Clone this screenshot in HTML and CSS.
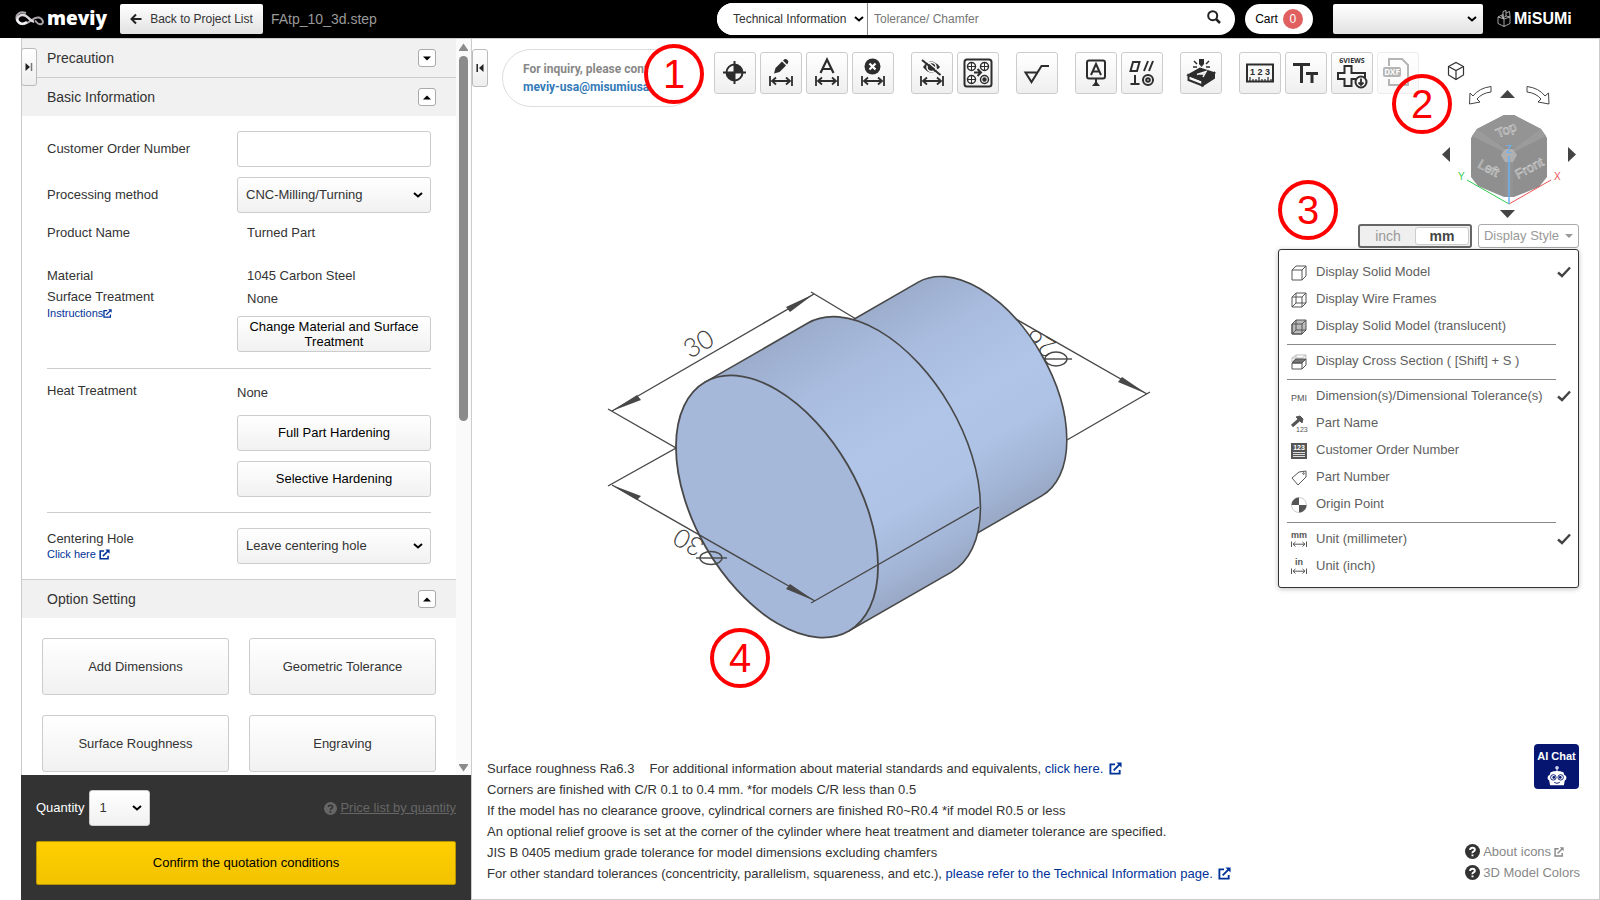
FILE: index.html
```html
<!DOCTYPE html>
<html lang="en">
<head>
<meta charset="utf-8">
<title>meviy - FAtp_10_3d.step</title>
<link rel="stylesheet" href="styles.css">
</head>
<body>
<svg class="defs" aria-hidden="true">
  <symbol id="ext" viewBox="0 0 14 14"><path d="M6.5 2.5H1.5V12.5H11.5V8.5" fill="none" stroke="currentColor" stroke-width="2"/><path d="M5 9L11.5 2.5" stroke="currentColor" stroke-width="2"/><path d="M8 0.5H13.5V6Z" fill="currentColor"/></symbol>
  <symbol id="dim" viewBox="0 0 24 10"><path d="M1 0V10M23 0V10M3 5H21M7 1.5L3 5L7 8.5M17 1.5L21 5L17 8.5" fill="none" stroke="currentColor" stroke-width="1.8"/></symbol>
  <symbol id="help" viewBox="0 0 14 14"><circle cx="7" cy="7" r="7" fill="currentColor"/><path class="help-mark" d="M4.800 5.500Q4.800 3.500 7 3.500T9.200 5.300Q9.200 6.300 8 6.900T7 8.600M7 9.800V11.500"/></symbol>
  <symbol id="check" viewBox="0 0 14 12"><path d="M1 6.5L5 10L13 1.5" fill="none" stroke="currentColor" stroke-width="2.4"/></symbol>
</svg>

<header class="topbar">
  <a class="logo" href="#">
    <svg width="30" height="16" viewBox="0 0 30 16" fill="none" aria-hidden="true">
      <path d="M11 2C5 0 1 3 1.500 7.500S7 15 12 12C17 9 20 5.500 24 6.500S29 12 26.500 13S21.500 11.500 20 9.500" stroke="#aaa4aa" stroke-width="2"/>
      <path d="M2 8.500C3 4.500 7 2.500 11 5S16 11 19 10.500" stroke="#ddd8dd" stroke-width="2.500"/>
      <path d="M2 8C3 13 8 14 12 11" stroke="#f2f2f2" stroke-width="2.500"/>
    </svg><span>meviy</span></a>
  <button class="back" type="button"><svg width="12" height="12" viewBox="0 0 12 12" aria-hidden="true"><path d="M11.500 6H2M6 1.500L1.500 6L6 10.500" fill="none" stroke="#222" stroke-width="2"/></svg>Back to Project List</button>
  <span class="filename">FAtp_10_3d.step</span>
  <form class="search">
    <select class="search-kind" aria-label="Search category"><option>Technical Information</option></select>
    <input class="search-text" type="text" placeholder="Tolerance/ Chamfer" aria-label="Search">
    <button class="search-go" type="button" aria-label="Search"><svg width="14" height="14" viewBox="0 0 14 14"><circle cx="5.700" cy="5.700" r="4.500" fill="none" stroke="#222" stroke-width="2"/><path d="M9 9L13 13" stroke="#222" stroke-width="2.500"/></svg></button>
  </form>
  <button class="cart" type="button">Cart <span class="count">0</span></button>
  <select class="account" aria-label="Account"><option></option></select>
  <a class="misumi" href="#"><svg width="14" height="18" viewBox="0 0 14 18" fill="none" stroke="#ccc" stroke-width="0.800" aria-hidden="true"><path d="M1 7L4 5.500L7 9L7 16.500L1 13.500ZM7 9L13 7V13.500L7 16.500M4 5.500L6 4.500V8M6 1.500L9 0.500V6L6 8ZM9 3L12.500 1.500L13 7M9 6L13 7M1 7L7 9"/></svg><span>MiSUMi</span></a>
</header>

<main class="workspace">
  <aside class="side">
    <button class="tab side-tab" type="button" aria-label="Expand panel"><svg width="8" height="8" viewBox="0 0 8 8"><path d="M0.500 0L5 4L0.500 8Z" fill="#222"/><path d="M6.500 0V8" stroke="#777" stroke-width="1.500"/></svg></button>
    <div class="side-body">
      <div class="scroll-content">
        <section class="sec">
          <h2>Precaution <button class="fold" type="button" aria-label="Open Precaution"><svg width="8" height="5" viewBox="0 0 8 5"><path d="M0 0.500H8L4 4.500Z"/></svg></button></h2>
        </section>
        <section class="sec">
          <h2>Basic Information <button class="fold" type="button" aria-label="Close Basic Information"><svg width="8" height="5" viewBox="0 0 8 5"><path d="M0 4.500H8L4 0.500Z"/></svg></button></h2>
          <div class="form">
            <div class="row tall"><label for="order">Customer Order Number</label><input id="order" class="field" type="text"></div>
            <div class="row tall"><label for="method">Processing method</label><select id="method" class="field"><option>CNC-Milling/Turning</option></select></div>
            <div class="row product"><span>Product Name</span><span class="value">Turned Part</span></div>
            <div class="row"><span>Material</span><span class="value">1045 Carbon Steel</span></div>
            <div class="row surface"><div>Surface Treatment<a class="mini" href="#">Instructions<svg width="9" height="9"><use href="#ext"/></svg></a></div>
              <div class="stack"><span class="value">None</span><button class="field two-line" type="button">Change Material and Surface Treatment</button></div></div>
            <hr>
            <div class="row heat"><span>Heat Treatment</span>
              <div class="stack"><span class="heat-value">None</span><button class="field" type="button">Full Part Hardening</button><button class="field" type="button">Selective Hardening</button></div></div>
            <hr>
            <div class="row tall"><div class="centering"><label for="hole">Centering Hole</label><a class="mini spaced" href="#">Click here<svg width="11" height="11"><use href="#ext"/></svg></a></div><select id="hole" class="field"><option>Leave centering hole</option></select></div>
          </div>
        </section>
        <section class="sec">
          <h2>Option Setting <button class="fold" type="button" aria-label="Close Option Setting"><svg width="8" height="5" viewBox="0 0 8 5"><path d="M0 4.500H8L4 0.500Z"/></svg></button></h2>
          <div class="options">
            <button type="button">Add Dimensions</button><button type="button">Geometric Tolerance</button>
            <button type="button">Surface Roughness</button><button type="button">Engraving</button>
          </div>
        </section>
      </div>
      <div class="scrollbar" aria-hidden="true">
        <svg width="9" height="8" viewBox="0 0 9 8"><path d="M4.500 0.500L9 7V8H0V7Z" fill="#8b8b8b"/></svg>
        <i class="thumb"></i>
        <svg width="9" height="8" viewBox="0 0 9 8"><path d="M0 0H9V1L4.500 7.500L0 1Z" fill="#8b8b8b"/></svg>
      </div>
    </div>
    <div class="order-bar">
      <div class="qty"><label for="qty">Quantity</label><select id="qty"><option>1</option></select>
        <a href="#"><svg width="13" height="13"><use href="#help"/></svg><u>Price list by quantity</u></a></div>
      <button class="confirm" type="button">Confirm the quotation conditions</button>
    </div>
  </aside>

  <section class="viewer">
    <svg class="model" width="560" height="390" viewBox="600 265 560 390" role="img" aria-label="Turned part with dimensions">
      <defs>
        <linearGradient id="big" gradientUnits="userSpaceOnUse" x1="806" y1="324" x2="950" y2="573"><stop offset="0" stop-color="#9cadcc"/><stop offset=".22" stop-color="#a9bcdf"/><stop offset=".5" stop-color="#b0c5e8"/><stop offset=".72" stop-color="#aec3e6"/><stop offset=".9" stop-color="#a3b5d6"/><stop offset="1" stop-color="#98a8c5"/></linearGradient>
        <linearGradient id="small" gradientUnits="userSpaceOnUse" x1="918" y1="282" x2="1042" y2="496"><stop offset="0" stop-color="#9cadcc"/><stop offset=".22" stop-color="#a9bcdf"/><stop offset=".5" stop-color="#b0c5e8"/><stop offset=".7" stop-color="#adc2e5"/><stop offset=".9" stop-color="#a1b3d3"/><stop offset="1" stop-color="#98a8c5"/></linearGradient>
      </defs>
      <g stroke="#484848" stroke-width="1.400" fill="none">
        <path d="M1000 310L1147 394M1150 392L1067 440"/>
        <path d="M1147 394L1118 382L1122 377Z" fill="#484848" stroke="none"/>
        <ellipse cx="1056" cy="359" rx="11" ry="7"/><path d="M1042 359H1072"/>
      </g>
      <text class="dimtext" transform="translate(1058 343) rotate(210)">26</text>
      <path d="M818.300 339.800L918.300 282.100A123.400 70.500 60 0 1 1041.700 495.900L941.700 553.600Z" fill="url(#small)" stroke="#484848" stroke-width="1.600"/>
      <path d="M705.200 382.100L807.500 323.300A143.700 82 60 0 1 951.400 572.100L848.900 630.900Z" fill="url(#big)" stroke="#484848" stroke-width="1.600"/>
      <ellipse cx="777" cy="506.500" rx="143.700" ry="82" transform="rotate(60 777 506.500)" fill="#a6b8da" stroke="#484848" stroke-width="1.800"/>
      <g stroke="#484848" stroke-width="1.400" fill="none">
        <path d="M612 411L814 294M811 292L856 319M608 409L676 448L608 486M612 485L815 601M811 603L979 507"/>
        <ellipse cx="711" cy="558" rx="11" ry="6.500"/><path d="M696 558H727"/>
      </g>
      <g fill="#484848"><path d="M814 294L786 307L790 312ZM612 411L637 395L641 400ZM612 485L637 500L641 496ZM815 601L786 589L790 584Z"/></g>
      <text class="dimtext" transform="translate(690 359) rotate(-30)">30</text>
      <text class="dimtext" transform="translate(706 542) rotate(210)">30</text>
    </svg>

    <div class="viewer-top">
      <button class="tab" type="button" aria-label="Collapse panel"><svg width="8" height="8" viewBox="0 0 8 8"><path d="M7.500 0L3 4L7.500 8Z" fill="#222"/><path d="M1.200 0V8" stroke="#222" stroke-width="1.500"/></svg></button>
      <div class="inquiry">For inquiry, please contact<a href="#">meviy-usa@misumiusa.com</a></div>
      <div class="tools">
        <div class="group">
          <button type="button" aria-label="Origin"><svg viewBox="0 0 42 42"><circle cx="20.500" cy="20.500" r="8" fill="none" stroke="currentColor" stroke-width="2"/><path d="M20.500 20.500V12.500A8 8 0 0 1 28.500 20.500ZM20.500 20.500V28.500A8 8 0 0 1 12.500 20.500Z" fill="currentColor"/><path d="M20.500 9V32M9 20.500H32" stroke="currentColor" stroke-width="2"/></svg></button>
          <button type="button" aria-label="Edit dimension"><svg viewBox="0 0 42 42"><path d="M14 21.500L15.500 16L22 9.500L26 13.500L19.500 20ZM23 8.500L24.500 7.200Q26 6.500 27.500 8T28 11L27 12.500Z" fill="currentColor"/><use href="#dim" x="9" y="24" width="24" height="10"/></svg></button>
          <button type="button" aria-label="Dimension text"><svg viewBox="0 0 42 42"><path d="M14.500 21L21 7.500L27.500 21M17 17H25" fill="none" stroke="currentColor" stroke-width="2.200"/><use href="#dim" x="9" y="24" width="24" height="10"/></svg></button>
          <button type="button" aria-label="Delete dimension"><svg viewBox="0 0 42 42"><circle cx="20.500" cy="14.500" r="8" fill="currentColor"/><path d="M17.500 11.500L23.500 17.500M23.500 11.500L17.500 17.500" stroke="#fff" stroke-width="2.200"/><use href="#dim" x="9" y="24" width="24" height="10"/></svg></button>
        </div>
        <div class="group">
          <button type="button" aria-label="Hide dimensions"><svg viewBox="0 0 42 42"><path d="M12 15Q20 4 29 15Q20 26 12 15Z" fill="currentColor"/><circle cx="20.500" cy="15" r="4.500" fill="none" stroke="#fff" stroke-width="1.500"/><path d="M12.500 6.500L31 21.500" stroke="#f7f7f7" stroke-width="1.500"/><path d="M11 8L29.500 23" stroke="currentColor" stroke-width="2"/><use href="#dim" x="9" y="24" width="24" height="10"/></svg></button>
          <button type="button" aria-label="Hole groups"><svg viewBox="0 0 42 42" fill="none" stroke="currentColor" stroke-width="1.500"><rect x="7.500" y="7.500" width="27" height="27" rx="2.500" stroke-width="2"/><circle cx="14.500" cy="14.500" r="4"/><circle cx="27.500" cy="14.500" r="4"/><circle cx="14.500" cy="27.500" r="4"/><circle cx="27.500" cy="27.500" r="4"/><circle cx="27.500" cy="27.500" r="1.500" fill="currentColor"/><path d="M14.500 10V19M10 14.500H19M27.500 10V19M23 14.500H32M14.500 23V32M10 27.500H19" stroke-width="1"/><path d="M17 20.500H23M20.500 17L24 20.500L20.500 24" stroke-width="2"/></svg></button>
        </div>
        <div class="group">
          <button type="button" aria-label="Surface roughness"><svg viewBox="0 0 42 42" fill="none" stroke="currentColor" stroke-width="2"><path d="M22 20.500H9.500L15.500 30L25.500 14H33"/></svg></button>
        </div>
        <div class="group">
          <button type="button" aria-label="Datum"><svg viewBox="0 0 42 42" fill="none" stroke="currentColor" stroke-width="2"><rect x="12" y="8.500" width="18" height="18" rx="2"/><path d="M16 23L21 12L26 23M18 19.500H24"/><path d="M21 27V31"/><path d="M21 29L25 34H17Z" fill="currentColor" stroke="none"/></svg></button>
          <button type="button" aria-label="Geometric tolerance"><svg viewBox="0 0 42 42" fill="none" stroke="currentColor" stroke-width="2"><path d="M12 10H18.500L16 19H9.500ZM23 19L27 9M28 19L32 9M14 23V32M9.500 32H18.500"/><circle cx="27" cy="28" r="5"/><circle cx="27" cy="28" r="1.800"/></svg></button>
        </div>
        <div class="group">
          <button type="button" aria-label="Engraving"><svg viewBox="0 0 42 42" fill="none" stroke="currentColor" stroke-width="2"><path d="M8.500 23L22.500 28.500V33.500L8.500 28Z" fill="#f5f5f5"/><path d="M22.500 28.500L34 21V26L22.500 33.500Z" fill="currentColor"/><path d="M8.500 23L20 16.500L34 21L22.500 28.500Z" fill="currentColor"/><path d="M17 22.500L26 19.500L23 25M19.500 22H24" stroke="#f5f5f5" stroke-width="1.500"/><path d="M19 7H24V12L21.500 15L19 12Z" fill="currentColor" stroke="none"/><path d="M14 9L17 12M29 9L26 12M13 15H17M26 15H30" stroke-width="1.500"/></svg></button>
        </div>
        <div class="group">
          <button type="button" aria-label="Measure"><svg viewBox="0 0 42 42"><rect x="8" y="12.500" width="26" height="17" fill="none" stroke="currentColor" stroke-width="2"/><text x="21" y="23" class="t9" text-anchor="middle">1 2 3</text><path d="M11 29V25M14 29V27M17 29V27M20 29V25M23 29V27M26 29V27M29 29V25M32 29V27" stroke="currentColor" stroke-width="1.200"/></svg></button>
          <button type="button" aria-label="Text size"><svg viewBox="0 0 42 42" fill="none" stroke="currentColor" stroke-width="3"><path d="M8 12.500H25M16.500 12.500V31M21 21.500H33M27 21.500V31"/></svg></button>
          <button type="button" aria-label="Download 6 views"><svg viewBox="0 0 42 42"><text x="21" y="11" class="t7" text-anchor="middle">6VIEWS</text><path d="M13.500 14H20.500V21H34V27H20.500V34H13.500V27H7V21H13.500Z" fill="none" stroke="currentColor" stroke-width="2"/><circle cx="30" cy="30" r="5.500" fill="#f5f5f5" stroke="currentColor" stroke-width="2"/><path d="M30 26.500V33M27.500 30.500L30 33L32.500 30.500" fill="none" stroke="currentColor" stroke-width="1.800"/></svg></button>
          <button class="off" type="button" aria-label="Download DXF" disabled><svg viewBox="0 0 42 42"><path d="M12 14V7H25L31 13V33H12V27" fill="none" stroke="currentColor" stroke-width="2"/><rect x="6" y="15" width="18" height="10" rx="2" fill="currentColor"/><text x="15" y="23" class="t7 inv" text-anchor="middle">DXF</text></svg></button>
        </div>
      </div>
    </div>

    <div class="view-panel">
      <svg class="nav" width="142" height="162" viewBox="1437 58 142 162" role="img" aria-label="View orientation">
        <g fill="#fff" stroke="#333" stroke-width="1.200"><path d="M1448.500 66.500L1456 62.500L1463.500 66.500V75L1456 79.500L1448.500 75ZM1448.500 66.500L1456 70.500L1463.500 66.500M1456 70.500V79.500" /></g>
        <g fill="#fff" stroke="#444" stroke-width="1"><path d="M1491 86.500Q1479 88 1473 96L1470 93L1469.500 104L1480 102L1477 99Q1482 93 1491 92Z"/><path d="M1527 86.500Q1539 88 1545 96L1548.500 93L1549 104L1538 102L1541 99Q1536 93 1527 92Z"/></g>
        <path d="M1500 98H1515L1507.500 90ZM1500 210H1515L1507.500 218ZM1450 147V162L1442 154.500ZM1568 147V162L1576 154.500Z" fill="#444"/>
        <path d="M1504 115H1514L1541 129L1547 138V177L1539 187L1514 197H1504L1478 186L1471 177V138L1477 129Z" fill="#8f8f8f"/>
        <path d="M1504 115H1514L1541 129L1513 148H1505L1477 129Z" fill="#949494"/>
        <path d="M1477 129L1504 148V152L1472 136ZM1541 129L1514 148V152L1546 136Z" fill="#9b9b9b"/>
        <path d="M1501 155L1505 149H1513L1517 155L1513 162H1505Z" fill="#b0b0b0"/>
        <path d="M1505 162H1513V197H1505Z" fill="#939393"/>
        <g class="cube-label"><text transform="translate(1498 138) rotate(-22)">Top</text><text transform="translate(1477 167) rotate(28)">Left</text><text transform="translate(1518 179) rotate(-28)">Front</text></g>
        <path d="M1467 180L1509 204" stroke="#3c5"/><path d="M1551 180L1509 204" stroke="#e55"/><path d="M1509 156V204" stroke="#6ab0f5" stroke-width="1.500"/>
        <text class="axis ax-y" x="1458" y="180">Y</text><text class="axis ax-x" x="1554" y="180">X</text><text class="axis ax-z" x="1506" y="153">Z</text>
      </svg>
      <div class="view-row">
        <div class="units"><button type="button">inch</button><button class="on" type="button">mm</button></div>
        <button class="style-btn" type="button">Display Style<svg width="8" height="4" viewBox="0 0 8 4"><path d="M0 0H8L4 4Z" fill="currentColor"/></svg></button>
      </div>
      <ul class="menu">
        <li><button type="button"><svg viewBox="0 0 16 16"><path d="M1 5H11V15H1ZM1 5L5 1H15V11L11 15M11 5L15 1"/></svg>Display Solid Model<svg class="tick"><use href="#check"/></svg></button></li>
        <li><button type="button"><svg viewBox="0 0 16 16"><path d="M1 5H11V15H1ZM1 5L5 1H15V11L11 15M11 5L15 1M5 1V11H15M5 11L1 15"/></svg>Display Wire Frames</button></li>
        <li><button type="button"><svg viewBox="0 0 16 16"><path d="M1 5L5 1H15V11L11 15H1Z" fill="#bbb"/><path d="M1 5H11V15H1ZM11 5L15 1M5 1V11H15M5 11L1 15"/></svg>Display Solid Model (translucent)</button></li>
        <li class="sep"><button type="button"><svg viewBox="0 0 16 16"><path d="M1 8L5 4V1H15V5M1 4L5 1M1 4V8M1 4H11L15 1" stroke="#bbb"/><path d="M1 9L5 5H15L11 9Z" fill="#777"/><path d="M1 9H11V15H1ZM15 5V11L11 15"/></svg>Display Cross Section ( [Shift] + S )</button></li>
        <li class="sep"><button type="button"><svg viewBox="0 0 16 16"><text x="0" y="12" class="m8">PMI</text></svg>Dimension(s)/Dimensional Tolerance(s)<svg class="tick"><use href="#check"/></svg></button></li>
        <li><button type="button"><svg viewBox="0 0 16 16"><path d="M1 10L9 3" stroke-width="3"/><path d="M5 1L9 0L12 3L11 7L8 4Z" fill="#555"/><text x="5" y="16" class="m6">123</text></svg>Part Name</button></li>
        <li><button type="button"><svg viewBox="0 0 16 16"><rect x="0.500" y="0.500" width="15" height="15" fill="#555"/><text x="8" y="7" class="m7" text-anchor="middle">123</text><path d="M2 9.500H14M2 11.500H14M2 13.500H14" stroke="#fff" stroke-width=".8"/></svg>Customer Order Number</button></li>
        <li><button type="button"><svg viewBox="0 0 16 16"><path d="M1 8L8 2L15 1V7L7 15Z"/><circle cx="12.500" cy="3.500" r=".8"/></svg>Part Number</button></li>
        <li><button type="button"><svg viewBox="0 0 16 16"><circle cx="8" cy="8" r="7.500" stroke="#ccc"/><path d="M8 8V0.500A7.500 7.500 0 0 0 .5 8ZM8 8V15.500A7.500 7.500 0 0 0 15.500 8Z" fill="#555" stroke="none"/></svg>Origin Point</button></li>
        <li class="sep"><button type="button"><svg viewBox="0 0 16 16"><text x="8" y="5.500" class="m9" text-anchor="middle">mm</text><path d="M.5 9.500V15M15.500 9.500V15M2 12.200H14M4.500 10L2 12.200L4.500 14.500M11.500 10L14 12.200L11.500 14.500"/></svg>Unit (millimeter)<svg class="tick"><use href="#check"/></svg></button></li>
        <li><button type="button"><svg viewBox="0 0 16 16"><text x="8" y="6" class="m9" text-anchor="middle">in</text><path d="M.5 9.500V15M15.500 9.500V15M2 12.200H14M4.500 10L2 12.200L4.500 14.500M11.500 10L14 12.200L11.500 14.500"/></svg>Unit (inch)</button></li>
      </ul>
    </div>

    <div class="viewer-bottom">
      <div class="notes">
        <p>Surface roughness Ra6.3<span class="more">For additional information about material standards and equivalents, <a href="#">click here. <svg width="13" height="13"><use href="#ext"/></svg></a></span></p>
        <p>Corners are finished with C/R 0.1 to 0.4 mm. *for models C/R less than 0.5</p>
        <p>If the model has no clearance groove, cylindrical corners are finished R0~R0.4 *if model R0.5 or less</p>
        <p>An optional relief groove is set at the corner of the cylinder where heat treatment and diameter tolerance are specified.</p>
        <p>JIS B 0405 medium grade tolerance for model dimensions excluding chamfers</p>
        <p>For other standard tolerances (concentricity, parallelism, squareness, and etc.), <a href="#">please refer to the Technical Information page. <svg width="13" height="13"><use href="#ext"/></svg></a></p>
      </div>
      <div class="corner">
        <button class="chat" type="button">AI Chat<svg width="22" height="22" viewBox="0 0 22 24"><circle cx="11" cy="3" r="2" fill="#cfd4ee"/><path d="M11 4V8" stroke="#fff"/><path d="M4 8Q11 5 18 8L19 11Q22 12 21 15.500L19.500 17L18.500 22H3.500L2.500 17L1 15.500Q0 12 3 11Z" fill="#fff"/><g fill="#fff" stroke="#061670" stroke-width="1"><circle cx="7" cy="13.500" r="3"/><circle cx="15" cy="13.500" r="3"/><path d="M8 19Q11 21 14 19" fill="none"/></g><circle cx="7.500" cy="13.500" r="1.500" fill="#061670"/><circle cx="14.500" cy="13.500" r="1.500" fill="#061670"/></svg></button>
        <a href="#"><svg width="15" height="15"><use href="#help"/></svg>About icons <svg width="10" height="10"><use href="#ext"/></svg></a>
        <a href="#"><svg width="15" height="15"><use href="#help"/></svg>3D Model Colors</a>
      </div>
    </div>
    <b class="mark m-1">1</b><b class="mark m-2">2</b><b class="mark m-3">3</b><b class="mark m-4">4</b>
  </section>
</main>
</body>
</html>
```
FILE: styles.css
```css
* { box-sizing: border-box; }
body {
  margin: 0;
  height: 100vh;
  display: flex;
  flex-direction: column;
  overflow: hidden;
  background: #fff;
  color: #333;
  font: 13px/18px "Liberation Sans", Arial, sans-serif;
}
button, input, select { font: inherit; color: inherit; margin: 0; }
button { cursor: pointer; padding: 0; }
a { color: #003399; text-decoration: none; }
select {
  --chevron: url("data:image/svg+xml,%3Csvg xmlns='http://www.w3.org/2000/svg' width='10' height='6'%3E%3Cpath d='M1 1L5 4.500L9 1' fill='none' stroke='black' stroke-width='2'/%3E%3C/svg%3E");
  appearance: none;
}
.defs { display: none; }
.help-mark { fill: none; stroke: var(--mark, #fff); stroke-width: 1.8; }

/* header */
.topbar {
  flex: none;
  height: 38px;
  padding: 0 29px 0 15px;
  display: flex;
  align-items: center;
  background: #000;
  font-size: 12px;
}
.logo { display: flex; align-items: center; gap: 2px; width: 105px; color: #fff; font: 800 19px/30px "Open Sans", sans-serif; }
.logo span { padding-bottom: 2px; }
.back {
  width: 143px;
  height: 30px;
  display: flex;
  align-items: center;
  justify-content: center;
  gap: 8px;
  border: 0;
  border-radius: 2px;
  background: linear-gradient(#fff, #e2e2e2);
}
.filename { margin-left: 8px; font-size: 14px; color: #999; }
.search { margin-left: auto; width: 518px; height: 32px; display: flex; border-radius: 16px; background: #fff; overflow: hidden; }
.search-kind { width: 151px; padding: 0 0 0 16px; border: 0; border-right: 1px solid #888; background: var(--chevron) no-repeat right 3px center, #fff; }
.search-text { flex: 1; min-width: 0; border: 0; padding: 0 6px; outline: 0; background: none; }
.search-text::placeholder { color: #777; }
.search-go { width: 42px; border: 0; background: none; }
.cart {
  margin-left: 10px;
  width: 68px;
  height: 30px;
  display: flex;
  align-items: center;
  justify-content: center;
  gap: 5px;
  border: 0;
  border-radius: 15px;
  background: #fff;
  color: #000;
}
.count { width: 20px; height: 20px; line-height: 20px; border-radius: 50%; background: #e06060; color: #fff; }
.account { margin-left: 20px; width: 150px; height: 30px; border: 0; border-radius: 2px; background: var(--chevron) no-repeat right 6px center, linear-gradient(#fff, #e2e2e2); }
.misumi { margin-left: 14px; width: 74px; display: flex; align-items: center; gap: 3px; color: #fff; font: bold 16px/30px "Liberation Sans", sans-serif; }
.misumi svg { flex: none; }

/* side panel */
.workspace { flex: 1; min-height: 0; display: flex; padding-left: 21px; }
.side { position: relative; flex: none; width: 450px; display: flex; flex-direction: column; }
.tab {
  width: 16px;
  height: 38px;
  flex: none;
  display: flex;
  align-items: center;
  justify-content: center;
  border: 1px solid #bbb;
  border-radius: 3px;
  background: linear-gradient(#fff, #eee);
}
.side-tab { position: absolute; left: 0; top: 10px; z-index: 1; }
.side-body { flex: 1; min-height: 0; display: flex; border-left: 1px solid #ccc; border-top: 1px solid #ccc; }
.scroll-content { flex: 1; overflow: hidden; }
.scrollbar { width: 15px; padding: 4px 0 3px; display: flex; flex-direction: column; align-items: center; background: #fafafa; }
.thumb { width: 9px; height: 365px; margin: 5px 0 auto; border-radius: 5px; background: #8b8b8b; }
.sec + .sec { border-top: 1px solid #ccc; }
h2 {
  margin: 0;
  height: 38px;
  padding: 0 20px 0 25px;
  display: flex;
  align-items: center;
  justify-content: space-between;
  background: #f1f1f1;
  font-size: 14px;
  font-weight: normal;
}
.fold { width: 18px; height: 18px; display: flex; align-items: center; justify-content: center; border: 1px solid #aaa; border-radius: 3px; background: #fff; }
.form { padding: 15px 25px; }
.row { display: grid; grid-template-columns: 190px 1fr; }
.row.tall { align-items: center; }
.row.tall + .row.tall { margin-top: 10px; }
.product { margin: 11px 0 25px; }
.value { padding-left: 10px; }
.field {
  width: 100%;
  height: 36px;
  padding: 0 8px;
  border: 1px solid #ccc;
  border-radius: 3px;
  background: linear-gradient(#fff, #f1f1f1);
}
input.field { background: #fff; }
select.field { background: var(--chevron) no-repeat right 7px center, linear-gradient(#fff, #f1f1f1); }
button.field { color: #000; }
.two-line { line-height: 15px; }
.surface { margin-top: 3px; }
.surface .stack { padding-top: 2px; gap: 8px; }
.stack { display: flex; flex-direction: column; }
.mini { display: flex; align-items: center; font-size: 11px; line-height: 14px; }
.spaced { gap: 3px; }
.heat .stack { gap: 10px; padding-top: 2px; }
.heat-value { margin-bottom: 3px; }
.centering { line-height: 16px; }
hr { margin: 15px 0; border: 0; border-top: 1px solid #ccc; }
.surface + hr { margin-top: 16px; }
hr + .heat { margin-top: -2px; }
.options { display: grid; grid-template-columns: 1fr 1fr; gap: 20px; padding: 20px; }
.options button { height: 57px; border: 1px solid #ccc; border-radius: 3px; background: linear-gradient(#fff, #f1f1f1); }
.order-bar { padding: 15px; background: #333; }
.qty { display: flex; align-items: center; margin-bottom: 15px; color: #fff; }
.qty select { width: 61px; height: 36px; margin-left: 5px; padding: 0 9px; border: 1px solid #ccc; border-radius: 3px; background: var(--chevron) no-repeat right 7px center, linear-gradient(#fff, #f1f1f1); color: #333; }
.qty a { --mark: #333; margin-left: auto; display: flex; align-items: center; gap: 3px; color: #666; }
.confirm { width: 100%; height: 44px; border: 1px solid #b89400; border-radius: 2px; background: linear-gradient(#ffcf00, #f2c300); color: #000; }

/* viewer */
.viewer {
  position: relative;
  flex: 1;
  min-width: 0;
  display: flex;
  flex-direction: column;
  justify-content: space-between;
  border: 1px solid #ccc;
}
.model { position: absolute; left: 128px; top: 226px; }
.dimtext { font: 300 26px Lato, "Liberation Sans", sans-serif; fill: #404040; }
.viewer-top { position: relative; display: flex; padding-top: 10px; align-items: flex-start; }
.inquiry {
  width: 196px;
  height: 58px;
  margin: 0 16px 0 14px;
  padding: 10px 20px 0;
  border: 1px solid #ddd;
  border-radius: 29px;
  background: #fff;
  color: #888;
  font: bold 12px/18px Roboto, "Liberation Sans", sans-serif;
  white-space: nowrap;
}
.inquiry a { display: block; color: #337ab7; }
.tools { display: flex; gap: 17px; padding-top: 3px; }
.group { display: flex; gap: 4px; }
.tools button { width: 42px; height: 42px; border: 1px solid #ccc; border-radius: 3px; background: linear-gradient(#fff, #efefef); color: #2d2d2d; }
.tools svg { display: block; width: 42px; height: 42px; margin: -1px; }
.tools .off { opacity: .35; }
.t9 { font: bold 9px "Liberation Sans", sans-serif; fill: currentColor; }
.t7 { font: bold 7px "Open Sans", sans-serif; fill: currentColor; }
.inv { fill: #fff; font-size: 8px; }

.view-panel { position: absolute; right: 20px; top: 19px; display: flex; flex-direction: column; align-items: flex-end; }
.nav { display: block; }
.cube-label { font: 13px "Liberation Sans", sans-serif; fill: #858585; stroke: #d0d0d0; stroke-width: .6; }
.axis { font: 10px "Liberation Sans", sans-serif; }
.ax-x { fill: #e55; }
.ax-y { fill: #3c5; }
.ax-z { fill: #6ab0f5; }
.view-row { display: flex; gap: 6px; margin-top: 4px; }
.units { display: flex; width: 114px; height: 24px; padding: 1px; border: 2px solid #666; border-radius: 3px; background: #efefef; }
.units button { flex: 1; border: 1px solid transparent; background: none; color: #999; font-size: 14px; line-height: 16px; }
.units .on { border-color: #ccc; border-radius: 3px; background: #fff; color: #444; font-weight: bold; }
.style-btn { width: 101px; height: 24px; display: flex; align-items: center; justify-content: center; gap: 6px; border: 1px solid #aaa; border-radius: 3px; background: #fff; color: #999; white-space: nowrap; }
.menu {
  width: 301px;
  margin: 1px 0 0;
  padding: 8px 7px;
  list-style: none;
  border: 1px solid #333;
  border-radius: 3px;
  background: #fff;
  box-shadow: 0 1px 5px rgba(0, 0, 0, .25);
}
.menu button { display: flex; align-items: center; width: 100%; height: 27px; padding: 0 0 0 5px; border: 0; background: none; color: #606060; text-align: left; }
.menu button svg { width: 16px; height: 16px; margin: 2px 9px 0 0; fill: none; stroke: #555; overflow: visible; }
.menu .tick { width: 14px; height: 12px; margin: 0 0 0 auto; color: #444; stroke: none; }
.menu .sep::before { content: ""; display: block; margin: 5px 15px 2px 1px; height: 1px; background: #888; }
.menu text { stroke: none; fill: #555; font: 9px "Liberation Sans", sans-serif; }
.menu text.m6 { font-size: 7px; }
.menu text.m7 { font-size: 7px; font-weight: bold; fill: #fff; }
.menu text.m9 { font-size: 9px; font-weight: bold; }

.viewer-bottom { position: relative; display: flex; justify-content: space-between; align-items: flex-end; padding: 0 19px 15px 15px; line-height: 21px; }
.notes p { margin: 0; }
.notes svg { vertical-align: -2px; margin-left: 2px; }
.more { margin-left: 15px; }
.corner { display: flex; flex-direction: column; padding-bottom: 1px; }
.corner a { display: flex; align-items: center; gap: 3px; color: #888; }
.corner svg { color: #333; }
.corner a svg + svg { color: #888; }
.chat { align-self: flex-end; width: 45px; height: 45px; margin: 0 1px 52px 0; border: 0; border-radius: 4px; background: #061670; color: #fff; font: bold 11px/18px "Liberation Sans", sans-serif; white-space: nowrap; }
.chat svg { display: block; margin: 0 auto; }

.mark { position: absolute; width: 60px; height: 60px; border: 4px solid #f00; border-radius: 50%; background: #fff; color: #f00; font-size: 40px; font-weight: normal; line-height: 52px; text-align: center; }
.m-1 { left: 172px; top: 5px; }
.m-2 { right: 147px; top: 35px; background: none; }
.m-3 { right: 261px; top: 141px; }
.m-4 { left: 238px; top: 589px; }
```
